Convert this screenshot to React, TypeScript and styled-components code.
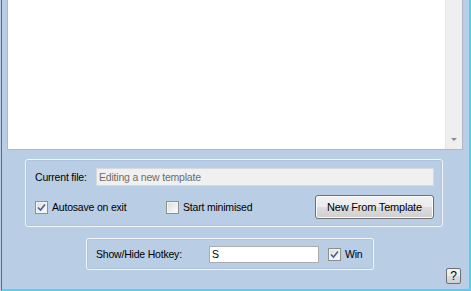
import React, { useState } from "react";
import styled, { createGlobalStyle } from "styled-components";

const GlobalStyle = createGlobalStyle`
  html, body {
    margin: 0;
    padding: 0;
    background: #b9cde5;
  }
  body {
    font-family: "Liberation Sans", Arial, sans-serif;
    font-size: 10.5px;
    letter-spacing: -0.2px;
    color: #000;
  }
`;

const CheckMark = () => (
  <svg width="9" height="9" viewBox="0 0 9 9">
    <path
      d="M1 4.5 L3.5 7 L8 1.5"
      fill="none"
      stroke="#4a5f97"
      strokeWidth="1.6"
    />
  </svg>
);

type CheckProps = {
  label: string;
  checked?: boolean;
  width?: number;
};

const Check = ({ label, checked = false, width }: CheckProps) => {
  const [on, setOn] = useState(checked);
  return (
    <CheckLabel $width={width} onClick={() => setOn(!on)}>
      <CheckBox>{on && <CheckMark />}</CheckBox>
      <span>{label}</span>
    </CheckLabel>
  );
};

const App = () => {
  return (
    <>
      <GlobalStyle />
      <Window>
        <Frame>
          <Editor>
            <EditorText />
            <ScrollBar>
              <ArrowDown />
            </ScrollBar>
          </Editor>

          <FileGroup>
            <Row>
              <FieldLabel $width={61}>Current file:</FieldLabel>
              <FileInput disabled value="Editing a new template" readOnly />
            </Row>
            <OptionsRow>
              <Check label="Autosave on exit" checked width={131} />
              <Check label="Start minimised" />
              <PushButton>New From Template</PushButton>
            </OptionsRow>
          </FileGroup>

          <BottomRow>
            <HotkeyGroup>
              <FieldLabel $width={113}>Show/Hide Hotkey:</FieldLabel>
              <KeyInput defaultValue="S" />
              <Check label="Win" checked />
            </HotkeyGroup>
            <HelpButton>?</HelpButton>
          </BottomRow>
        </Frame>
      </Window>
    </>
  );
};

const Window = styled.div`
  width: 471px;
  height: 291px;
  box-sizing: border-box;
  padding-left: 1px;
  background: #b9cde5;
  overflow: hidden;
`;

const Frame = styled.div`
  height: 100%;
  box-sizing: border-box;
  border-left: 1px solid #5d6b7c;
  border-right: 2px solid #4fd3ec;
  border-bottom: 2px solid #4fd3ec;
  padding: 0 5px 0 5px;
  display: flex;
  flex-direction: column;
`;

const Editor = styled.div`
  height: 150px;
  width: 456px;
  box-sizing: border-box;
  border: 1px solid #aab8c9;
  border-top: none;
  background: #fff;
  display: flex;
`;

const EditorText = styled.div`
  flex: 1;
`;

const ScrollBar = styled.div`
  width: 16px;
  background: #efefef;
  border-left: 1px solid #e6e6e6;
  display: flex;
  align-items: flex-end;
  justify-content: center;
  padding-bottom: 8px;
`;

const ArrowDown = styled.div`
  width: 0;
  height: 0;
  border-left: 3px solid transparent;
  border-right: 3px solid transparent;
  border-top: 3px solid #8a8a8a;
`;

const GroupBox = styled.div`
  box-sizing: border-box;
  border: 1px solid #f2f6fb;
  border-radius: 3px;
  box-shadow: inset 0 0 0 1px rgba(160, 180, 205, 0.35);
`;

const FileGroup = styled(GroupBox)`
  margin: 9px 0 0 18px;
  width: 418px;
  height: 68px;
  padding: 8px 8px 0 9px;
  display: flex;
  flex-direction: column;
  gap: 9px;
`;

const Row = styled.div`
  display: flex;
  align-items: center;
`;

const FieldLabel = styled.span<{ $width: number }>`
  white-space: nowrap;
  width: ${(p) => p.$width}px;
  flex-shrink: 0;
`;

const TextInput = styled.input`
  box-sizing: border-box;
  font-family: "Liberation Sans", Arial, sans-serif;
  font-size: 10.5px;
  letter-spacing: -0.2px;
  padding: 0 2px;
  outline: none;
  border: 1px solid #abadb3;
  background: #fff;
  color: #000;
`;

const FileInput = styled(TextInput)`
  flex: 1;
  height: 18px;
  background: #f0f0f0;
  border-color: #d6dae0;
  color: #6d6d6d;
`;

const OptionsRow = styled.div`
  display: flex;
  align-items: center;
`;

const CheckLabel = styled.label<{ $width?: number }>`
  display: flex;
  align-items: center;
  gap: 4px;
  width: ${(p) => (p.$width ? `${p.$width}px` : "auto")};
  cursor: default;
  white-space: nowrap;
`;

const CheckBox = styled.span`
  width: 13px;
  height: 13px;
  box-sizing: border-box;
  border: 1px solid #8e8f8f;
  background: linear-gradient(135deg, #dcdcdc 0%, #f4f4f4 70%, #fff 100%);
  box-shadow: inset 0 0 0 1px #f4f4f4;
  display: flex;
  align-items: center;
  justify-content: center;
`;

const PushButton = styled.button`
  margin-left: auto;
  width: 119px;
  height: 24px;
  box-sizing: border-box;
  font-family: "Liberation Sans", Arial, sans-serif;
  font-size: 11px;
  letter-spacing: -0.2px;
  color: #000;
  border: 1px solid #707070;
  border-radius: 3px;
  background: linear-gradient(
    to bottom,
    #f2f2f2 0%,
    #ebebeb 50%,
    #dddddd 51%,
    #cfcfcf 100%
  );
  box-shadow: inset 0 0 0 1px #fbfbfb;
  padding: 0;
`;

const BottomRow = styled.div`
  display: flex;
  align-items: flex-start;
  margin-top: 11px;
`;

const HotkeyGroup = styled(GroupBox)`
  margin-left: 79px;
  width: 288px;
  height: 32px;
  padding: 0 9px;
  display: flex;
  align-items: center;
`;

const KeyInput = styled(TextInput)`
  width: 110px;
  height: 17px;
  margin-right: 9px;
`;

const HelpButton = styled.button`
  margin: 30px 3px 0 auto;
  width: 15px;
  height: 16px;
  box-sizing: border-box;
  font-family: "Liberation Sans", Arial, sans-serif;
  font-size: 12px;
  padding: 0;
  border: 1px solid #707070;
  border-radius: 2px;
  background: linear-gradient(to bottom, #f2f2f2 0%, #ebebeb 50%, #dddddd 51%, #cfcfcf 100%);
`;

export default App;
